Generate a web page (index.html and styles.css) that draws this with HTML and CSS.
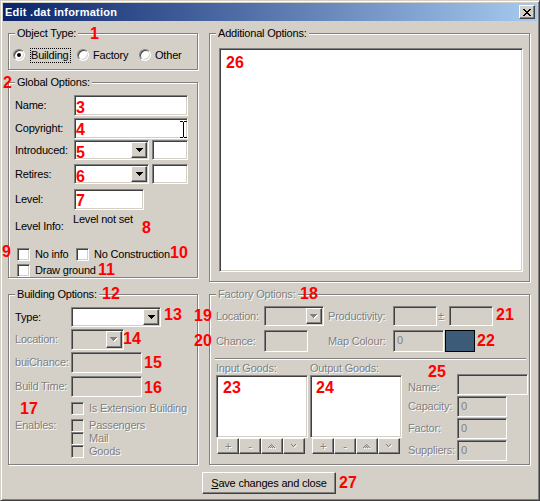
FILE: index.html
```html
<!DOCTYPE html>
<html>
<head>
<meta charset="utf-8">
<title>Edit .dat information</title>
<link rel="stylesheet" href="styles.css">
</head>
<body>
<div class="window">
  <div class="titlebar">
    <span class="title">Edit .dat information</span>
    <span class="closebtn raised">
      <svg width="8" height="7" viewBox="0 0 8 7"><path d="M0 0h2v1h-2zM6 0h2v1h-2zM1 1h2v1h-2zM5 1h2v1h-2zM2 2h4v1h-4zM3 3h2v1h-2zM2 4h4v1h-4zM1 5h2v1h-2zM5 5h2v1h-2zM0 6h2v1h-2zM6 6h2v1h-2z" fill="#000"/></svg>
    </span>
  </div>

  <div class="client">
    <div class="cols">
      <div class="col-left">
        <div class="group g-type">
          <div class="legend">Object Type:</div>
          <div class="radios">
            <div class="ritem r1"><span class="radio on"></span><span class="focus">Building</span></div>
            <div class="ritem r2"><span class="radio"></span><span>Factory</span></div>
            <div class="ritem"><span class="radio"></span><span>Other</span></div>
          </div>
        </div>

        <div class="group g-global">
          <div class="legend">Global Options:</div>
          <div class="form form-global">
            <span class="lbl l21">Name:</span>
            <span class="edit sunk w114 h21"></span>
            <span class="lbl l21">Copyright:</span>
            <span class="edit sunk w114 h21"></span>
            <span class="lbl l20">Introduced:</span>
            <span class="pair">
              <span class="combo sunk w75 h20"><span class="cbtn raised"><svg width="7" height="4" viewBox="0 0 7 4"><path d="M0 0h7v1h-1v1h-1v1h-1v1h-1v-1h-1v-1h-1v-1h-1z" fill="#000"/></svg></span></span>
              <span class="edit sunk w36 h20"></span>
            </span>
            <span class="lbl l20">Retires:</span>
            <span class="pair">
              <span class="combo sunk w75 h20"><span class="cbtn raised"><svg width="7" height="4" viewBox="0 0 7 4"><path d="M0 0h7v1h-1v1h-1v1h-1v1h-1v-1h-1v-1h-1v-1h-1z" fill="#000"/></svg></span></span>
              <span class="edit sunk w36 h20"></span>
            </span>
            <span class="lbl l21">Level:</span>
            <span class="edit sunk w70 h21"></span>
          </div>
          <div class="info">
            <span class="info-lbl">Level Info:</span>
            <span class="info-val">Level not set</span>
          </div>
          <div class="checks">
            <div class="crow">
              <span class="citem c1"><span class="cb"></span><span>No info</span></span>
              <span class="citem"><span class="cb"></span><span>No Construction</span></span>
            </div>
            <div class="crow crow2">
              <span class="citem"><span class="cb"></span><span>Draw ground</span></span>
            </div>
          </div>
        </div>
      </div>

      <div class="group g-add">
        <div class="legend">Additional Options:</div>
        <div class="sunk ta"></div>
      </div>

      <div class="group g-build">
        <div class="legend">Building Options:</div>
        <div class="form form-build">
          <span class="lbl l20">Type:</span>
          <span class="combo sunk w90 h20"><span class="cbtn raised"><svg width="7" height="4" viewBox="0 0 7 4"><path d="M0 0h7v1h-1v1h-1v1h-1v1h-1v-1h-1v-1h-1v-1h-1z" fill="#000"/></svg></span></span>

          <span class="lbl l21 dis">Location:</span>
          <span class="combo sunk off w53 h21"><span class="cbtn raised"><svg width="8" height="5" viewBox="0 0 8 5"><path transform="translate(1 1)" d="M0 0h7v1h-1v1h-1v1h-1v1h-1v-1h-1v-1h-1v-1h-1z" fill="#fff"/><path d="M0 0h7v1h-1v1h-1v1h-1v1h-1v-1h-1v-1h-1v-1h-1z" fill="#808080"/></svg></span></span>

          <span class="lbl l21 dis">buiChance:</span>
          <span class="edit sunk off w71 h21"></span>

          <span class="lbl l21 dis">Build Time:</span>
          <span class="edit sunk off w71 h21"></span>

          <span></span>
          <span class="citem dis"><span class="cb off"></span><span>Is Extension Building</span></span>

          <span class="lbl l13 dis">Enables:</span>
          <span class="citem dis"><span class="cb off"></span><span>Passengers</span></span>
          <span></span>
          <span class="citem dis"><span class="cb off"></span><span>Mail</span></span>
          <span></span>
          <span class="citem dis"><span class="cb off"></span><span>Goods</span></span>
        </div>
      </div>

      <div class="group g-fact">
        <div class="legend dis">Factory Options:</div>
        <div class="frow frow1">
          <span class="flbl dis">Location:</span>
          <span class="combo sunk off w60 h20"><span class="cbtn raised"><svg width="8" height="5" viewBox="0 0 8 5"><path transform="translate(1 1)" d="M0 0h7v1h-1v1h-1v1h-1v1h-1v-1h-1v-1h-1v-1h-1z" fill="#fff"/><path d="M0 0h7v1h-1v1h-1v1h-1v1h-1v-1h-1v-1h-1v-1h-1z" fill="#808080"/></svg></span></span>
          <span class="flbl2 dis">Productivity:</span>
          <span class="edit sunk off w44 h20"></span>
          <span class="pm dis">±</span>
          <span class="edit sunk off w44 h20"></span>
        </div>
        <div class="frow frow2">
          <span class="flbl dis">Chance:</span>
          <span class="edit sunk off w44 h22"></span>
          <span class="flbl2 gap20 dis">Map Colour:</span>
          <span class="edit sunk off w51 h22 val">0</span>
          <span class="swatch"></span>
        </div>
        <div class="sep"></div>
        <div class="goods">
          <div class="gcol">
            <div class="glbl dis">Input Goods:</div>
            <div class="sunk list"></div>
            <div class="gbtns gb-in">
              <span class="sbtn raised dis">+</span>
              <span class="sbtn raised dis">-</span>
              <span class="sbtn raised"><svg width="8" height="5" viewBox="0 0 8 5"><g fill="#fff" transform="translate(1 1)"><rect x="3" y="0" width="1" height="1"/><rect x="2" y="1" width="1" height="1"/><rect x="4" y="1" width="1" height="1"/><rect x="1" y="2" width="1" height="1"/><rect x="3" y="2" width="1" height="1"/><rect x="5" y="2" width="1" height="1"/><rect x="0" y="3" width="1" height="1"/><rect x="2" y="3" width="1" height="1"/><rect x="4" y="3" width="1" height="1"/><rect x="6" y="3" width="1" height="1"/></g><g fill="#808080"><rect x="3" y="0" width="1" height="1"/><rect x="2" y="1" width="1" height="1"/><rect x="4" y="1" width="1" height="1"/><rect x="1" y="2" width="1" height="1"/><rect x="3" y="2" width="1" height="1"/><rect x="5" y="2" width="1" height="1"/><rect x="0" y="3" width="1" height="1"/><rect x="2" y="3" width="1" height="1"/><rect x="4" y="3" width="1" height="1"/><rect x="6" y="3" width="1" height="1"/></g></svg></span>
              <span class="sbtn raised"><svg width="6" height="4" viewBox="0 0 6 4"><g fill="#fff" transform="translate(1 1)"><rect x="0" y="0" width="1" height="1"/><rect x="4" y="0" width="1" height="1"/><rect x="1" y="1" width="1" height="1"/><rect x="3" y="1" width="1" height="1"/><rect x="2" y="2" width="1" height="1"/></g><g fill="#808080"><rect x="0" y="0" width="1" height="1"/><rect x="4" y="0" width="1" height="1"/><rect x="1" y="1" width="1" height="1"/><rect x="3" y="1" width="1" height="1"/><rect x="2" y="2" width="1" height="1"/></g></svg></span>
            </div>
          </div>
          <div class="gcol gcol2">
            <div class="glbl dis">Output Goods:</div>
            <div class="sunk list"></div>
            <div class="gbtns gb-out">
              <span class="sbtn raised dis">+</span>
              <span class="sbtn raised dis">-</span>
              <span class="sbtn raised"><svg width="8" height="5" viewBox="0 0 8 5"><g fill="#fff" transform="translate(1 1)"><rect x="3" y="0" width="1" height="1"/><rect x="2" y="1" width="1" height="1"/><rect x="4" y="1" width="1" height="1"/><rect x="1" y="2" width="1" height="1"/><rect x="3" y="2" width="1" height="1"/><rect x="5" y="2" width="1" height="1"/><rect x="0" y="3" width="1" height="1"/><rect x="2" y="3" width="1" height="1"/><rect x="4" y="3" width="1" height="1"/><rect x="6" y="3" width="1" height="1"/></g><g fill="#808080"><rect x="3" y="0" width="1" height="1"/><rect x="2" y="1" width="1" height="1"/><rect x="4" y="1" width="1" height="1"/><rect x="1" y="2" width="1" height="1"/><rect x="3" y="2" width="1" height="1"/><rect x="5" y="2" width="1" height="1"/><rect x="0" y="3" width="1" height="1"/><rect x="2" y="3" width="1" height="1"/><rect x="4" y="3" width="1" height="1"/><rect x="6" y="3" width="1" height="1"/></g></svg></span>
              <span class="sbtn raised"><svg width="6" height="4" viewBox="0 0 6 4"><g fill="#fff" transform="translate(1 1)"><rect x="0" y="0" width="1" height="1"/><rect x="4" y="0" width="1" height="1"/><rect x="1" y="1" width="1" height="1"/><rect x="3" y="1" width="1" height="1"/><rect x="2" y="2" width="1" height="1"/></g><g fill="#808080"><rect x="0" y="0" width="1" height="1"/><rect x="4" y="0" width="1" height="1"/><rect x="1" y="1" width="1" height="1"/><rect x="3" y="1" width="1" height="1"/><rect x="2" y="2" width="1" height="1"/></g></svg></span>
            </div>
          </div>
          <div class="gfields">
            <span class="lbl l21 dis lname">Name:</span>
            <span class="edit sunk off w71 h21"></span>
            <span class="lbl l21 dis">Capacity:</span>
            <span class="edit sunk off w50 h21 val">0</span>
            <span class="lbl l21 dis">Factor:</span>
            <span class="edit sunk off w50 h21 val">0</span>
            <span class="lbl l21 dis">Suppliers:</span>
            <span class="edit sunk off w50 h21 val">0</span>
          </div>
        </div>
      </div>
    </div>

    <div class="actions">
      <span class="btn raised"><u>S</u>ave changes and close</span>
    </div>
  </div>

  <svg class="ibeam" width="7" height="17" viewBox="0 0 7 17"><path d="M0 0h3v1h-3zM4 0h3v1h-3zM3 1h1v15h-1zM0 16h3v1h-3zM4 16h3v1h-3z" fill="#000"/></svg>

  <b class="n n1">1</b>
  <b class="n n2">2</b>
  <b class="n n3">3</b>
  <b class="n n4">4</b>
  <b class="n n5">5</b>
  <b class="n n6">6</b>
  <b class="n n7">7</b>
  <b class="n n8">8</b>
  <b class="n n9">9</b>
  <b class="n n10">10</b>
  <b class="n n11">11</b>
  <b class="n n12">12</b>
  <b class="n n13">13</b>
  <b class="n n14">14</b>
  <b class="n n15">15</b>
  <b class="n n16">16</b>
  <b class="n n17">17</b>
  <b class="n n18">18</b>
  <b class="n n19">19</b>
  <b class="n n20">20</b>
  <b class="n n21">21</b>
  <b class="n n22">22</b>
  <b class="n n23">23</b>
  <b class="n n24">24</b>
  <b class="n n25">25</b>
  <b class="n n26">26</b>
  <b class="n n27">27</b>
</div>
</body>
</html>
```

FILE: styles.css
```css
* { box-sizing: border-box; }
html, body { margin: 0; padding: 0; }
body {
  font-family: "Liberation Sans", Arial, sans-serif;
  font-size: 11px;
  letter-spacing: -0.2px;
  color: #000;
  background: #d4d0c8;
}

/* window frame */
.window {
  position: relative;
  width: 540px;
  height: 501px;
  background: #d4d0c8;
  border: 1px solid;
  border-color: #d4d0c8 #404040 #404040 #d4d0c8;
  box-shadow: inset 1px 1px #fff, inset -1px -1px #808080;
  padding: 2px;
  display: flex;
  flex-direction: column;
}
.titlebar {
  height: 18px;
  flex: none;
  display: flex;
  align-items: center;
  justify-content: space-between;
  padding: 0 2px;
  background: linear-gradient(to right, #0a246a, #a6caf0);
}
.title {
  color: #fff;
  font-weight: bold;
  font-size: 11px;
  letter-spacing: 0.25px;
  line-height: 18px;
}
.closebtn {
  width: 16px;
  height: 14px;
  display: flex;
  align-items: center;
  justify-content: center;
}
.closebtn svg { display: block; }

/* 3d styles */
.raised {
  border: 1px solid;
  border-color: #fff #404040 #404040 #fff;
  box-shadow: inset -1px -1px #808080;
  background: #d4d0c8;
}
.sunk {
  border: 1px solid;
  border-color: #808080 #fff #fff #808080;
  box-shadow: inset 1px 1px #404040, inset -1px -1px #d4d0c8;
  background: #fff;
}
.sunk.off { background: #d4d0c8; }
.dis { color: #808080; text-shadow: 1px 1px 0 #fff; }

/* client */
.client {
  flex: 1;
  padding: 12px 7px 0 5px;
}
.cols {
  display: grid;
  grid-template-columns: 190px 321px;
  grid-template-rows: 249px 171px;
  column-gap: 11px;
  row-gap: 12px;
}
.col-left {
  display: flex;
  flex-direction: column;
  gap: 12px;
}
.group {
  border: 1px solid #808080;
  box-shadow: inset 1px 1px #fff, 1px 1px #fff;
}
.legend {
  width: max-content;
  height: 13px;
  line-height: 13px;
  margin: -7px 0 0 6px;
  padding: 0 2px;
  background: #d4d0c8;
}

/* object type */
.g-type { height: 37px; }
.radios {
  display: flex;
  align-items: center;
  height: 14px;
  margin-top: 8px;
  padding-left: 4px;
}
.ritem { display: flex; align-items: center; line-height: 13px; }
.r1 { width: 64px; }
.r2 { width: 62px; }
.radio {
  width: 12px;
  height: 12px;
  border-radius: 50%;
  background: #fff;
  border: 1px solid;
  border-color: #808080 #fff #fff #808080;
  box-shadow: inset 1px 1px #404040, inset -1px -1px #d4d0c8;
  margin-right: 4px;
  display: flex;
  align-items: center;
  justify-content: center;
  flex: none;
}
.radio.on::after {
  content: "";
  width: 4px;
  height: 4px;
  border-radius: 50%;
  background: #000;
}
.focus {
  border: 1px dotted #000;
  margin-left: 1px;
  line-height: 13px;
  padding-right: 1px;
}

/* forms */
.form {
  display: grid;
  align-items: start;
  margin-top: 6px;
  padding-left: 6px;
}
.form-global {
  grid-template-columns: 59px auto;
  grid-template-rows: 23px 22px 24px 25px 21px;
}
.form-build {
  grid-template-columns: 56px auto;
  grid-template-rows: 22px 23px 24px 26px 17px 13px 13px 13px;
}
.lbl { white-space: nowrap; }
.l21 { line-height: 21px; }
.l20 { line-height: 20px; }
.l13 { line-height: 13px; }
.edit { display: block; }
.val { color: #808080; line-height: 18px; padding-left: 3px; }
.h20 { height: 20px; }
.h21 { height: 21px; }
.h22 { height: 22px; }
.w36 { width: 36px; }
.w44 { width: 44px; }
.w50 { width: 50px; }
.w51 { width: 51px; }
.w53 { width: 53px; }
.w60 { width: 60px; }
.w70 { width: 70px; }
.w71 { width: 71px; }
.w75 { width: 75px; }
.w90 { width: 90px; }
.w114 { width: 114px; }
.pair { display: flex; gap: 3px; }
.combo {
  display: flex;
  justify-content: flex-end;
  padding: 1px;
}
.cbtn {
  width: 16px;
  height: 100%;
  display: flex;
  align-items: center;
  justify-content: center;
}
.cbtn svg { display: block; }

.info {
  display: grid;
  grid-template-columns: 59px auto;
  height: 27px;
  padding-left: 6px;
  line-height: 13px;
}
.info-lbl { padding-top: 10px; }
.info-val { padding-top: 3px; margin-left: -1px; }

.checks { margin-top: 11px; padding-left: 8px; }
.crow { display: flex; height: 13px; align-items: center; }
.crow2 { margin-top: 3px; }
.citem { display: flex; align-items: center; height: 13px; line-height: 13px; white-space: nowrap; }
.c1 { width: 59px; }
.cb {
  width: 13px;
  height: 13px;
  flex: none;
  background: #fff;
  border: 1px solid;
  border-color: #808080 #fff #fff #808080;
  box-shadow: inset 1px 1px #404040, inset -1px -1px #d4d0c8;
  margin-right: 5px;
}
.cb.off { background: #d4d0c8; }

/* additional options */
.ta {
  margin: 8px 0 0 9px;
  width: 304px;
  height: 224px;
}

/* factory */
.frow {
  display: flex;
  align-items: center;
  padding-left: 6px;
}
.frow1 { margin-top: 5px; height: 20px; }
.frow2 { margin-top: 4px; height: 22px; }
.flbl { width: 48px; white-space: nowrap; }
.flbl2 { width: 65px; margin-left: 4px; white-space: nowrap; }
.gap20 { margin-left: 20px; }
.pm { width: 12px; padding-left: 1px; }
.swatch {
  width: 30px;
  height: 22px;
  margin-left: 1px;
  background: #3b5b79;
  border: 1px solid #000;
}
.sep {
  height: 1px;
  background: #808080;
  box-shadow: 0 1px #fff;
  margin: 6px 3px 0 5px;
}
.goods {
  display: flex;
  align-items: flex-start;
  margin-top: 3px;
  padding-left: 6px;
}
.gcol { width: 92px; }
.gcol2 { margin-left: 2px; }
.glbl { height: 13px; line-height: 13px; white-space: nowrap; }
.list { height: 63px; }
.gbtns { display: flex; }
.gb-in { margin-left: 1px; }
.gb-out { margin-left: 2px; }
.sbtn {
  width: 22px;
  height: 16px;
  display: flex;
  align-items: center;
  justify-content: center;
  line-height: 14px;
  font-size: 11px;
}
.sbtn svg { display: block; }
.gfields {
  display: grid;
  grid-template-columns: 49px auto;
  grid-template-rows: 22px 22px 22px 22px;
  align-items: start;
  margin-left: 6px;
  margin-top: 12px;
}
.lname { padding-top: 3px; line-height: 20px; }

/* save */
.actions {
  display: flex;
  justify-content: center;
  margin-top: 7px;
}
.btn {
  width: 134px;
  height: 22px;
  line-height: 20px;
  text-align: center;
}

/* cursor overlay */
.ibeam { position: absolute; left: 179px; top: 120px; }

/* annotation numbers */
.n {
  position: absolute;
  color: #f00;
  font: bold 16px/16px "Liberation Sans", Arial, sans-serif;
  letter-spacing: 0;
  white-space: nowrap;
}
.n1 { left: 89px; top: 25px; }
.n2 { left: 2px; top: 74px; }
.n3 { left: 75px; top: 99px; }
.n4 { left: 75px; top: 121px; }
.n5 { left: 75px; top: 144px; }
.n6 { left: 75px; top: 168px; }
.n7 { left: 75px; top: 192px; }
.n8 { left: 141px; top: 219px; }
.n9 { left: 1px; top: 243px; }
.n10 { left: 169px; top: 244px; }
.n11 { left: 97px; top: 261px; }
.n12 { left: 101px; top: 285px; }
.n13 { left: 163px; top: 306px; }
.n14 { left: 122px; top: 330px; }
.n15 { left: 143px; top: 354px; }
.n16 { left: 143px; top: 379px; }
.n17 { left: 19px; top: 400px; }
.n18 { left: 299px; top: 285px; }
.n19 { left: 193px; top: 307px; }
.n20 { left: 193px; top: 332px; }
.n21 { left: 495px; top: 306px; }
.n22 { left: 476px; top: 332px; }
.n23 { left: 222px; top: 379px; }
.n24 { left: 315px; top: 379px; }
.n25 { left: 427px; top: 363px; }
.n26 { left: 225px; top: 54px; }
.n27 { left: 338px; top: 474px; }
```
